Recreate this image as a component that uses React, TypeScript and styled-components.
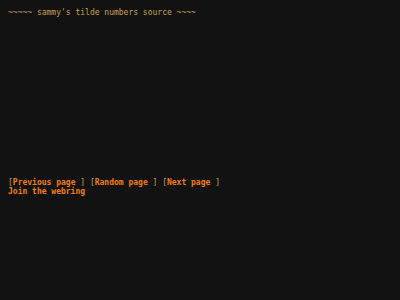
import React from "react";
import styled, { createGlobalStyle } from "styled-components";

const Global = createGlobalStyle`
  html, body {
    margin: 0;
    padding: 0;
    background: #121212;
  }
  body {
    padding: 8px;
    font-family: "DejaVu Sans Mono", "Liberation Mono", monospace;
    font-size: 8px;
    line-height: 9px;
    color: #c9a055;
  }
`;

const Page = styled.div`
  display: flex;
  flex-direction: column;
`;

const Header = styled.div`
  color: #c9a055;
  white-space: pre;
`;

const Content = styled.div`
  height: 161px;
`;

const Nav = styled.nav`
  display: flex;
  flex-direction: column;
`;

const Row = styled.div`
  white-space: pre;
  color: #c9a055;
`;

const Link = styled.a`
  color: #f07f14;
  font-weight: bold;
  text-decoration: none;
`;

export default function App() {
  return (
    <Page>
      <Global />
      <Header>~~~~~ sammy's tilde numbers source ~~~~</Header>
      <Content />
      <Nav>
        <Row>
          [<Link href="#">Previous page</Link> ] [<Link href="#">Random page</Link> ] [
          <Link href="#">Next page</Link> ]
        </Row>
        <Row>
          <Link href="#">Join the webring</Link>
        </Row>
      </Nav>
    </Page>
  );
}
